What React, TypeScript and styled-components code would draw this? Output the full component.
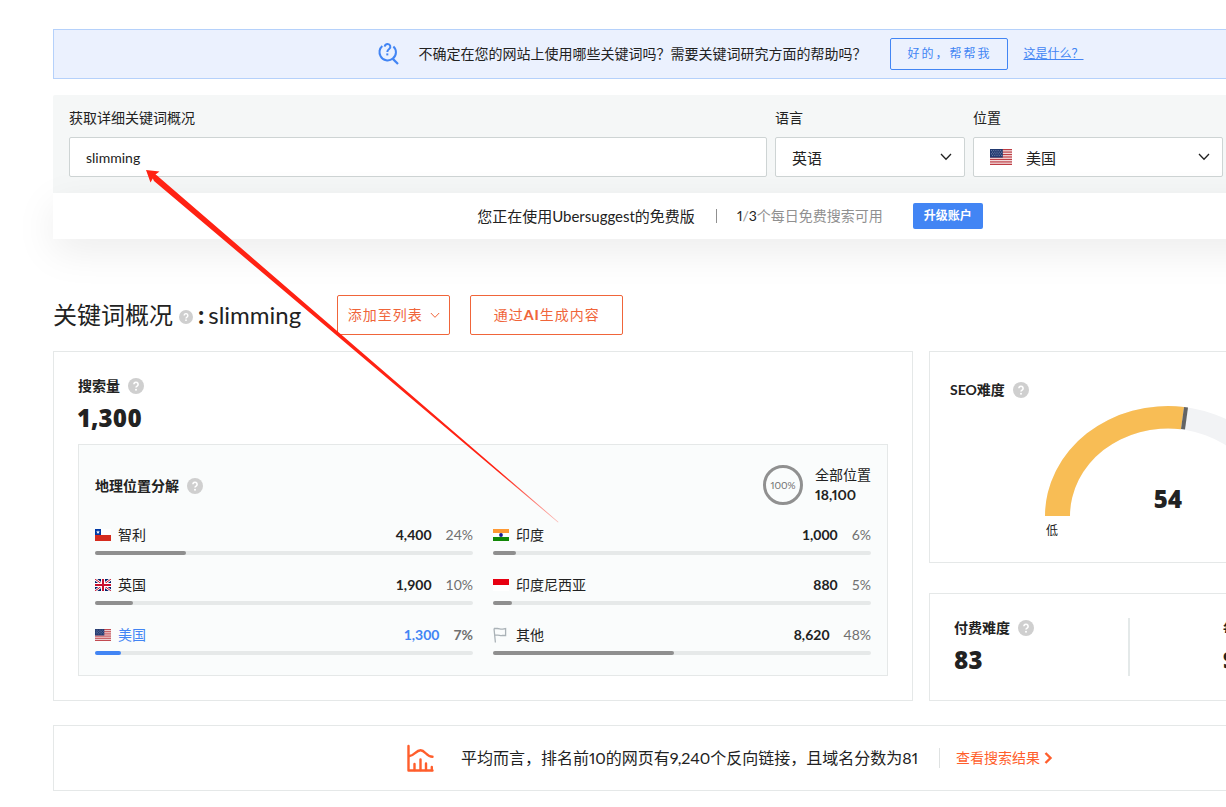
import React from "react";
import styled, { createGlobalStyle } from "styled-components";

const GlobalStyle = createGlobalStyle`
  *, *::before, *::after { box-sizing: border-box; }
  html, body { margin: 0; background: #fff; }
  body {
    overflow-x: hidden;
    color: #222;
    font-family: Lato, "Noto Sans CJK SC", sans-serif;
    font-size: 14px;
    font-variant-numeric: proportional-nums;
    line-height: 20px;
  }
  button, input, select { font: inherit; color: inherit; margin: 0; }
  h1, h2, p { margin: 0; font-size: inherit; font-weight: inherit; }
`;

const Page = styled.main`
  position: relative;
  padding: 29px 0 16px 53px;
  overflow: hidden;
`;

const Content = styled.div`
  min-width: 1354px;
`;

const Banner = styled.section`
  display: flex;
  align-items: center;
  justify-content: center;
  height: 50px;
  padding-left: 2px;
  border: 1px solid #b5d1fb;
  background: #ebf1fe;

  svg { margin-right: 18px; }
`;

const HelpButton = styled.button`
  width: 118px;
  height: 32px;
  margin: 0 15px 0 24px;
  padding: 0;
  border: 1px solid #4285f4;
  border-radius: 2px;
  background: transparent;
  color: #4285f4;
  font-size: 12px;
  letter-spacing: 2px;
`;

const BlueLink = styled.a`
  color: #4285f4;
  font-size: 12px;
  text-decoration: underline;
`;

const SearchPanel = styled.form`
  display: grid;
  grid-template-columns: 1fr 190px 250px 160px;
  gap: 8px;
  margin-top: 16px;
  padding: 12px 16px 16px;
  border-radius: 2px 2px 0 0;
  background: #f5f7f7;
`;

const Field = styled.label`
  display: flex;
  flex-direction: column;
  gap: 8px;
  line-height: 22px;
`;

const Control = styled.span`
  display: flex;
  align-items: center;
  height: 40px;
  padding: 0 12px 0 16px;
  border: 1px solid #ced4d4;
  border-radius: 2px;
  background: #fff;
`;

const TextInput = styled.input`
  flex: 1;
  min-width: 0;
  padding: 2px 0 0;
  border: 0;
  outline: 0;
  background: transparent;
`;

const Select = styled.select<{ $indent?: boolean }>`
  flex: 1;
  min-width: 0;
  padding: 2px 0 0 ${(p) => (p.$indent ? "14px" : "0")};
  border: 0;
  outline: 0;
  background: transparent;
  appearance: none;
  font-size: 15px;
`;

const UsageBar = styled.section`
  position: relative;
  display: flex;
  align-items: center;
  justify-content: center;
  height: 46px;
  background: #fff;
  box-shadow: 0 12px 40px rgba(0, 0, 0, 0.08);
`;

const Plan = styled.p`
  padding-right: 21px;
  && { font-size: 15px; }
`;

const Quota = styled.p`
  position: relative;
  padding-left: 21px;
  margin-right: 30px;
  color: #909090;

  b { color: #222; font-weight: 400; }
  &::before {
    content: "";
    position: absolute;
    left: 0;
    top: 3px;
    height: 14px;
    border-left: 1px solid #909090;
  }
`;

const UpgradeButton = styled.button`
  width: 70px;
  height: 26px;
  padding: 0;
  border: 0;
  border-radius: 2px;
  background: #4285f4;
  color: #fff;
  font-size: 12px;
  font-weight: 700;
`;

const TitleRow = styled.header`
  display: flex;
  align-items: center;
  height: 40px;
  margin-top: 56px;
`;

const Title = styled.h1`
  display: flex;
  align-items: center;
  margin-right: 36px;
  && { font-size: 24px; }
  line-height: 40px;

  svg { margin: 4px 5px 0 6px; }
  b { margin-right: 4px; font-weight: 900; }
`;

const OutlineButton = styled.button<{ $wide?: boolean }>`
  display: flex;
  align-items: center;
  justify-content: center;
  gap: 7px;
  width: ${(p) => (p.$wide ? "153px" : "113px")};
  height: 40px;
  margin-right: 20px;
  padding: 0;
  border: 1px solid #f0653a;
  border-radius: 2px;
  background: #fff;
  color: #f0653a;
  letter-spacing: 1px;

  b { font-weight: 900; }
`;

const Overview = styled.div`
  display: grid;
  grid-template-columns: 860fr 478fr;
  gap: 16px;
  margin-top: 16px;
`;

const Card = styled.section`
  border: 1px solid #e5e8e8;
  background: #fff;
`;

const VolumeCard = styled(Card)`
  padding: 24px;
`;

const SideColumn = styled.div`
  display: flex;
  flex-direction: column;
  justify-content: space-between;
  gap: 30px;
`;

const Label = styled.h2`
  display: flex;
  align-items: center;
  gap: 8px;
  && { font-weight: 700; }
`;

const BigNumber = styled.p`
  margin-top: 6px;
  font-family: "Open Sans", sans-serif;
  && { font-size: 24px; font-weight: 800; }
  line-height: 32px;
`;

const GeoPanel = styled.div`
  margin-top: 10px;
  padding: 20px 16px 0;
  border: 1px solid #e5e8e8;
  background: #fafcfc;
`;

const GeoHeader = styled.div`
  display: flex;
  align-items: center;
  justify-content: space-between;
  height: 40px;

  h2 { padding-top: 2px; }
`;

const Total = styled.div`
  display: flex;
  align-items: center;
  gap: 12px;
`;

const Ring = styled.span`
  display: grid;
  place-items: center;
  width: 40px;
  height: 40px;
  border: 3px solid #909090;
  border-radius: 50%;
  color: #707070;
  font-size: 10px;
`;

const TotalText = styled.p`
  b { display: block; }
`;

const GeoColumns = styled.div`
  display: grid;
  grid-template-columns: 1fr 1fr;
  column-gap: 20px;
  margin-top: 20px;
  font-variant-numeric: tabular-nums;
`;

const CountryRow = styled.div<{ $active?: boolean }>`
  display: grid;
  grid-template-columns: 16px 1fr auto auto;
  align-items: center;
  height: 50px;
  row-gap: 6px;
  align-content: start;
  color: ${(p) => (p.$active ? "#4285f4" : "#222")};
`;

const CountryName = styled.span`
  padding-left: 7px;
`;

const Share = styled.span<{ $active?: boolean }>`
  padding-left: 14px;
  color: #707070;
  font-weight: ${(p) => (p.$active ? 700 : 400)};
`;

const Track = styled.span`
  grid-column: 1 / -1;
  height: 4px;
  border-radius: 2px;
  background: #e6e9e9;
`;

const Fill = styled.span<{ $active?: boolean }>`
  display: block;
  height: 4px;
  border-radius: 2px;
  background: ${(p) => (p.$active ? "#4285f4" : "#8f8f8f")};
`;

const GaugeCard = styled(Card)`
  height: 212px;
  padding: 28px 20px 0;
`;

const Gauge = styled.div`
  position: relative;
  width: 246px;
  margin: 6px auto 0;

  svg { display: block; }
`;

const GaugeValue = styled.strong`
  position: absolute;
  inset: auto 0 26px;
  text-align: center;
  font-family: "Open Sans", sans-serif;
  font-size: 24px;
  font-weight: 800;
  line-height: 32px;
`;

const GaugeScale = styled.div`
  padding: 5px 1px 0;
  font-size: 12px;
`;

const CostCard = styled(Card)`
  display: grid;
  grid-template-columns: 174px 1fr;
  height: 108px;
  padding: 24px;
`;

const Metric = styled.div<{ $divided?: boolean }>`
  height: 58px;
  border-left: ${(p) => (p.$divided ? "2px solid #e4e9e9" : "0")};
  padding-left: ${(p) => (p.$divided ? "93px" : "0")};
  white-space: nowrap;
`;

const SummaryCard = styled(Card)`
  display: flex;
  align-items: center;
  justify-content: center;
  height: 66px;
  margin-top: 24px;
`;

const SummaryText = styled.p`
  padding: 0 21px 0 27px;
  && { font-size: 16px; }
  line-height: 24px;
`;

const ResultsLink = styled.a`
  display: flex;
  align-items: center;
  gap: 4px;
  padding-left: 16px;
  border-left: 1px solid #dfe2e2;
  color: #ff5e2c;
  text-decoration: none;
`;

const Pointer = styled.svg`
  position: absolute;
  left: 146px;
  top: 169px;
  pointer-events: none;
`;

const Help = ({ size = 16 }: { size?: number }) => (
  <svg width={size} height={size} viewBox="0 0 16 16" aria-hidden="true">
    <circle cx="8" cy="8" r="8" fill="#cfcfcf" />
    <path d="M5.9 6.3a2.1 2.1 0 1 1 3.2 1.8c-.8.5-1.1.8-1.1 1.5" fill="none" stroke="#fff" strokeWidth="1.6" />
    <circle cx="8" cy="11.7" r="1" fill="#fff" />
  </svg>
);

const Chevron = ({ width = 12, strokeWidth = 1.3 }: { width?: number; strokeWidth?: number }) => (
  <svg width={width} height={width / 2 + 2} viewBox="0 0 12 8" fill="none" stroke="currentColor" strokeWidth={strokeWidth} aria-hidden="true">
    <path d="M1 1l5 5.2L11 1" />
  </svg>
);

const SearchHelpIcon = () => (
  <svg width="22" height="24" viewBox="0 0 22 24" fill="none" stroke="#4285f4" strokeWidth="2" aria-hidden="true">
    <path d="M4.3 4A8 8 0 0 0 2.6 14.2 8 8 0 0 0 14.8 16.6 8 8 0 0 0 15.4 4.4" />
    <path d="M14.6 16.6L20 22" strokeWidth="2.2" />
    <path d="M6.7 4.6A3 3 0 0 1 9.6 2a2.7 2.7 0 0 1 1.6 4.9C10 7.8 9.3 8.3 9.3 10" />
    <path d="M9.3 11.4v2" />
  </svg>
);

const ChartIcon = () => (
  <svg width="27" height="28" viewBox="0 0 27 28" fill="none" stroke="#ff5e2c" strokeWidth="2.4" strokeLinecap="round" aria-hidden="true">
    <path d="M1.500 2v24.500h24" strokeLinejoin="round" />
    <path d="M2.500 12C7 12 9 6.300 13.600 6.300S19.500 12.800 25.500 12.800" />
    <path d="M7.500 20v6M13.500 15.500v10.500M19 19.500v6.500M24.800 23v3" />
  </svg>
);

type FlagCode = "cl" | "gb" | "us" | "in" | "id" | "other";

const stripes = [0, 2, 4, 6, 8, 10, 12];

const flagArt: Record<FlagCode, React.ReactNode> = {
  cl: (
    <>
      <path fill="#fff" d="M0 0h16v6H0z" />
      <path fill="#d52b1e" d="M0 6h16v6H0z" />
      <path fill="#0039a6" d="M0 0h6v6H0z" />
      <path fill="#fff" d="M3 1.200l.5 1.300h1.400l-1.100.9.4 1.400L3 4l-1.200.8.4-1.400-1.100-.9h1.400z" />
    </>
  ),
  gb: (
    <>
      <path fill="#012169" d="M0 0h16v12H0z" />
      <path stroke="#fff" strokeWidth="2.600" d="M0 0l16 12M16 0L0 12" />
      <path stroke="#c8102e" strokeWidth="1" d="M0 0l16 12M16 0L0 12" />
      <path stroke="#fff" strokeWidth="4" d="M8 0v12M0 6h16" />
      <path stroke="#c8102e" strokeWidth="2" d="M8 0v12M0 6h16" />
    </>
  ),
  us: (
    <>
      <path fill="#f6e6e8" d="M0 0h16v12H0z" />
      {stripes.map((s) => (
        <rect key={s} y={(s * 12) / 13} width="16" height={12 / 13} fill="#bd3d44" />
      ))}
      <path fill="#233a70" d="M0 0h9.300v6.460H0z" />
      <path stroke="#9fabcb" strokeWidth=".6" strokeDasharray=".6 1" d="M.8 1.200h8M1.600 2.400h7M.8 3.600h8M1.600 4.800h7" />
    </>
  ),
  in: (
    <>
      <path fill="#ff9933" d="M0 0h16v4H0z" />
      <path fill="#fff" d="M0 4h16v4H0z" />
      <path fill="#128807" d="M0 8h16v4H0z" />
      <circle cx="8" cy="6" r="1.900" fill="#1a1a90" />
    </>
  ),
  id: (
    <>
      <path fill="#e70011" d="M0 0h16v6H0z" />
      <path fill="#fff" d="M0 6h16v6H0z" />
    </>
  ),
  other: (
    <path d="M1 -.5h3.500c2 0 3 1 5.200.6L12.600-.5v7H9.500c-2.200.5-3.200-.6-5.200-.4H1.700M1-.5L2.400 13.500" fill="none" stroke="#aab2b7" strokeWidth="1.300" />
  ),
};

const Flag = ({ code, width = 16, height = 12 }: { code: FlagCode; width?: number; height?: number }) => (
  <svg width={width} height={height} viewBox="0 0 16 12" preserveAspectRatio="none" overflow={code === "other" ? "visible" : "hidden"} aria-hidden="true">
    {flagArt[code]}
  </svg>
);

interface Country {
  code: FlagCode;
  name: string;
  volume: string;
  share: number;
  active?: boolean;
}

const leftCountries: Country[] = [
  { code: "cl", name: "智利", volume: "4,400", share: 24 },
  { code: "gb", name: "英国", volume: "1,900", share: 10 },
  { code: "us", name: "美国", volume: "1,300", share: 7, active: true },
];

const rightCountries: Country[] = [
  { code: "in", name: "印度", volume: "1,000", share: 6 },
  { code: "id", name: "印度尼西亚", volume: "880", share: 5 },
  { code: "other", name: "其他", volume: "8,620", share: 48 },
];

const CountryList = ({ items }: { items: Country[] }) => (
  <div>
    {items.map((c) => (
      <CountryRow key={c.code} $active={c.active}>
        <Flag code={c.code} />
        <CountryName>{c.name}</CountryName>
        <b>{c.volume}</b>
        <Share $active={c.active}>{c.share}%</Share>
        <Track>
          <Fill $active={c.active} style={{ width: `${c.share}%` }} />
        </Track>
      </CountryRow>
    ))}
  </div>
);

export default function App() {
  return (
    <>
      <GlobalStyle />
      <Page>
        <Content>
          <Banner>
            <SearchHelpIcon />
            <p>不确定在您的网站上使用哪些关键词吗？需要关键词研究方面的帮助吗？</p>
            <HelpButton type="button">好的，帮帮我</HelpButton>
            <BlueLink href="#about">这是什么？</BlueLink>
          </Banner>

          <SearchPanel>
            <Field>
              获取详细关键词概况
              <Control>
                <TextInput type="text" defaultValue="slimming" />
              </Control>
            </Field>
            <Field>
              语言
              <Control>
                <Select defaultValue="en">
                  <option value="en">英语</option>
                </Select>
                <Chevron />
              </Control>
            </Field>
            <Field>
              位置
              <Control>
                <Flag code="us" width={22} height={16} />
                <Select defaultValue="us" $indent>
                  <option value="us">美国</option>
                </Select>
                <Chevron />
              </Control>
            </Field>
          </SearchPanel>

          <UsageBar>
            <Plan>您正在使用Ubersuggest的免费版</Plan>
            <Quota>
              <b>1</b>/<b>3</b>个每日免费搜索可用
            </Quota>
            <UpgradeButton type="button">升级账户</UpgradeButton>
          </UsageBar>

          <TitleRow>
            <Title>
              关键词概况 <Help size={14} /> <b>:</b> slimming
            </Title>
            <OutlineButton type="button">
              添加至列表
              <Chevron width={10} strokeWidth={1.2} />
            </OutlineButton>
            <OutlineButton type="button" $wide>
              <span>
                通过<b>AI</b>生成内容
              </span>
            </OutlineButton>
          </TitleRow>

          <Overview>
            <VolumeCard>
              <Label>
                搜索量 <Help />
              </Label>
              <BigNumber>1,300</BigNumber>
              <GeoPanel>
                <GeoHeader>
                  <Label>
                    地理位置分解 <Help />
                  </Label>
                  <Total>
                    <Ring>100%</Ring>
                    <TotalText>
                      全部位置
                      <b>18,100</b>
                    </TotalText>
                  </Total>
                </GeoHeader>
                <GeoColumns>
                  <CountryList items={leftCountries} />
                  <CountryList items={rightCountries} />
                </GeoColumns>
              </GeoPanel>
            </VolumeCard>

            <SideColumn>
              <GaugeCard>
                <Label>
                  SEO难度 <Help />
                </Label>
                <Gauge>
                  <svg width="246" height="110" viewBox="0 0 246 110" aria-hidden="true">
                    <path fill="#f2f3f5" d="M0 110A123 110 0 0 1 246 110H221A98 87.500 0 0 0 25 110z" />
                    <path fill="#f8bd55" d="M0 110A123 110 0 0 1 139 1L136 23.200A98 87.500 0 0 0 25 110z" />
                    <path fill="#646464" d="M139 1l4 .5-3 22-4-.4z" />
                  </svg>
                  <GaugeValue>54</GaugeValue>
                  <GaugeScale>低</GaugeScale>
                </Gauge>
              </GaugeCard>
              <CostCard>
                <Metric>
                  <Label>
                    付费难度 <Help />
                  </Label>
                  <BigNumber>83</BigNumber>
                </Metric>
                <Metric $divided>
                  <Label>每次点击费用</Label>
                  <BigNumber>$</BigNumber>
                </Metric>
              </CostCard>
            </SideColumn>
          </Overview>

          <SummaryCard>
            <ChartIcon />
            <SummaryText>平均而言，排名前10的网页有9,240个反向链接，且域名分数为81</SummaryText>
            <ResultsLink href="#results">
              查看搜索结果
              <svg width="9" height="14" viewBox="0 0 9 14" fill="none" stroke="currentColor" strokeWidth="2.400" aria-hidden="true">
                <path d="M1.500 2l5 5-5 5" />
              </svg>
            </ResultsLink>
          </SummaryCard>
        </Content>

        <Pointer width="414" height="356" viewBox="0 0 414 356" aria-hidden="true">
          <defs>
            <linearGradient id="tail" gradientUnits="userSpaceOnUse" x1="0" y1="0" x2="412" y2="353">
              <stop offset="0.860" stopColor="#ff2213" />
              <stop offset="1" stopColor="#ff2213" stopOpacity="0.300" />
            </linearGradient>
          </defs>
          <path fill="url(#tail)" d="M0 1L13.500 2.500 9.500 5.500Q11.500 6.500 13 8.200L412.500 353 412 353.500 8 12 6.800 9.500 4.500 13.500z" />
        </Pointer>
      </Page>
    </>
  );
}
